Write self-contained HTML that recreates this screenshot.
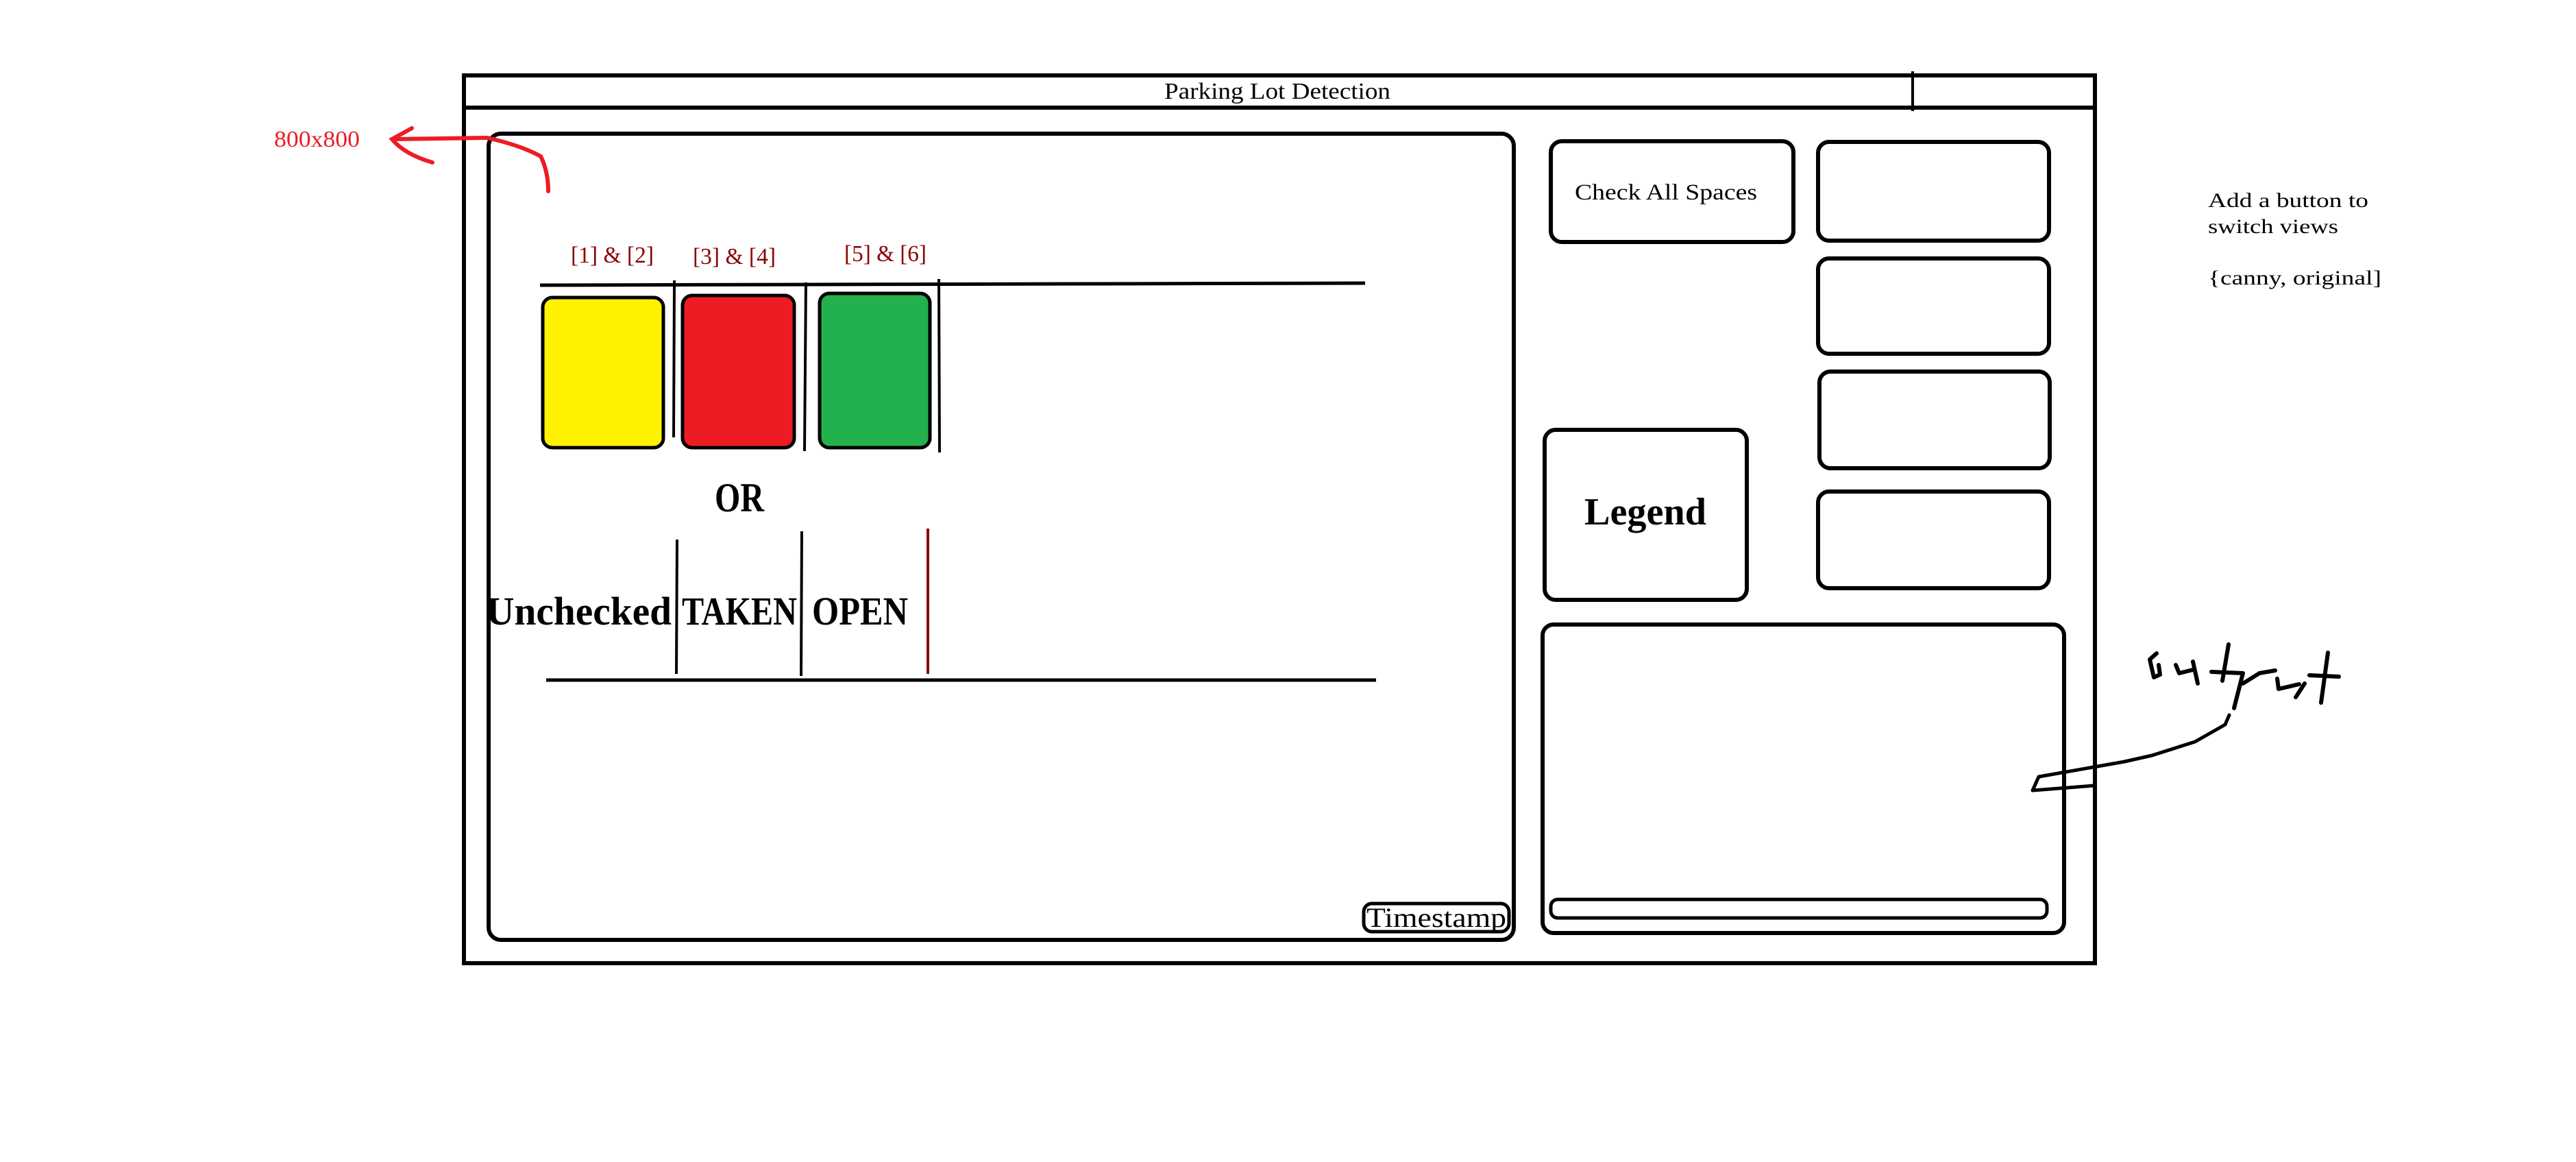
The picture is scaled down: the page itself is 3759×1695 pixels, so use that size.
<!DOCTYPE html>
<html><head><meta charset="utf-8"><style>
html,body{margin:0;padding:0;background:#fff;}
body{width:3759px;height:1695px;position:relative;overflow:hidden;}
svg{position:absolute;left:0;top:0;}
text{font-family:"Liberation Serif",serif;}
</style></head><body>
<svg width="3759" height="1695" viewBox="0 0 3759 1695">
<g fill="none" stroke="#000" stroke-width="6">
<rect x="677" y="110" width="2380" height="1295"/>
<line x1="677" y1="157" x2="3057" y2="157"/>
<line x1="2791" y1="104" x2="2791" y2="162" stroke-width="4"/>
<rect x="713" y="195" width="1496" height="1176" rx="18"/>
<rect x="2263" y="206" width="354" height="147" rx="16"/>
<rect x="2653" y="207" width="337" height="144" rx="16"/>
<rect x="2653" y="377" width="337" height="139" rx="16"/>
<rect x="2655" y="542" width="336" height="141" rx="16"/>
<rect x="2653" y="717" width="337" height="141" rx="16"/>
<rect x="2254" y="627" width="295" height="248" rx="16"/>
<rect x="2251" y="911" width="761" height="450" rx="16"/>
<rect x="2263" y="1312" width="724" height="27" rx="10" stroke-width="5"/>
<rect x="1990" y="1318" width="212" height="41" rx="12" stroke-width="5"/>
<line x1="788" y1="416" x2="1992" y2="413" stroke-width="5"/>
<line x1="797" y1="992" x2="2008" y2="992" stroke-width="5"/>
<line x1="984" y1="409" x2="983" y2="638" stroke-width="4"/>
<line x1="1176" y1="412" x2="1174" y2="658" stroke-width="4"/>
<line x1="1370" y1="407" x2="1371" y2="660" stroke-width="4"/>
<line x1="988" y1="787" x2="987" y2="983" stroke-width="4"/>
<line x1="1170" y1="775" x2="1169" y2="986" stroke-width="4"/>
<line x1="1354" y1="771" x2="1354" y2="983" stroke="#8b0000" stroke-width="4"/>
</g>
<rect x="792" y="434" width="176" height="219" rx="14" fill="#fff200" stroke="#000" stroke-width="5"/>
<rect x="996" y="431" width="163" height="222" rx="14" fill="#ed1c24" stroke="#000" stroke-width="5"/>
<rect x="1196" y="428" width="161" height="225" rx="14" fill="#22b14c" stroke="#000" stroke-width="5"/>
<text x="1699" y="144" font-size="34" textLength="330" lengthAdjust="spacingAndGlyphs">Parking Lot Detection</text>
<text x="833" y="383" font-size="34" fill="#8b0000" textLength="121" lengthAdjust="spacingAndGlyphs">[1] &amp; [2]</text>
<text x="1011" y="385" font-size="34" fill="#8b0000" textLength="121" lengthAdjust="spacingAndGlyphs">[3] &amp; [4]</text>
<text x="1232" y="381" font-size="34" fill="#8b0000" textLength="120" lengthAdjust="spacingAndGlyphs">[5] &amp; [6]</text>
<text x="1043" y="746" font-size="60" font-weight="bold" textLength="72" lengthAdjust="spacingAndGlyphs">OR</text>
<text x="709" y="911" font-size="58" font-weight="bold" textLength="271" lengthAdjust="spacingAndGlyphs">Unchecked</text>
<text x="995" y="911" font-size="58" font-weight="bold" textLength="168" lengthAdjust="spacingAndGlyphs">TAKEN</text>
<text x="1185" y="911" font-size="58" font-weight="bold" textLength="140" lengthAdjust="spacingAndGlyphs">OPEN</text>
<text x="1994" y="1352" font-size="40" textLength="204" lengthAdjust="spacingAndGlyphs">Timestamp</text>
<text x="2298" y="291" font-size="33" textLength="266" lengthAdjust="spacingAndGlyphs">Check All Spaces</text>
<text x="2312" y="765" font-size="56" font-weight="bold" textLength="178" lengthAdjust="spacingAndGlyphs">Legend</text>
<text x="3222" y="302" font-size="30" textLength="234" lengthAdjust="spacingAndGlyphs">Add a button to</text>
<text x="3222" y="340" font-size="30" textLength="190" lengthAdjust="spacingAndGlyphs">switch views</text>
<text x="3222" y="415" font-size="30" textLength="253" lengthAdjust="spacingAndGlyphs">{canny, original]</text>
<text x="400" y="214" font-size="34" fill="#ed1c24" textLength="125" lengthAdjust="spacingAndGlyphs">800x800</text>
<g fill="none" stroke="#ed1c24" stroke-width="6" stroke-linecap="round">
<path d="M572 203 L711 201 Q760 212 789 228 Q800 250 800 279"/>
<path d="M601 187 L572 203 Q590 225 631 237"/>
</g>
<g fill="none" stroke="#000" stroke-width="6" stroke-linecap="round" stroke-linejoin="round">
<path d="M3147 953 L3137 962 L3143 988 L3152 984 L3150 970"/>
<path d="M3175 970 L3180 982 L3200 977 M3200 965 L3207 997"/>
<path d="M3252 940 L3243 993 M3227 980 L3273 982"/>
<path d="M3273 982 L3260 1033 M3273 997 L3297 982 L3320 978"/>
<path d="M3323 990 L3325 1005 L3355 998 M3363 997 L3350 1017"/>
<path d="M3397 952 L3387 1025 M3370 985 L3413 987"/>
<path d="M3253 1043 L3247 1057 L3203 1082 L3140 1102 L3100 1111 L2975 1133 L2966 1153 L3055 1146" stroke-width="5"/>
</g>
</svg>
</body></html>
